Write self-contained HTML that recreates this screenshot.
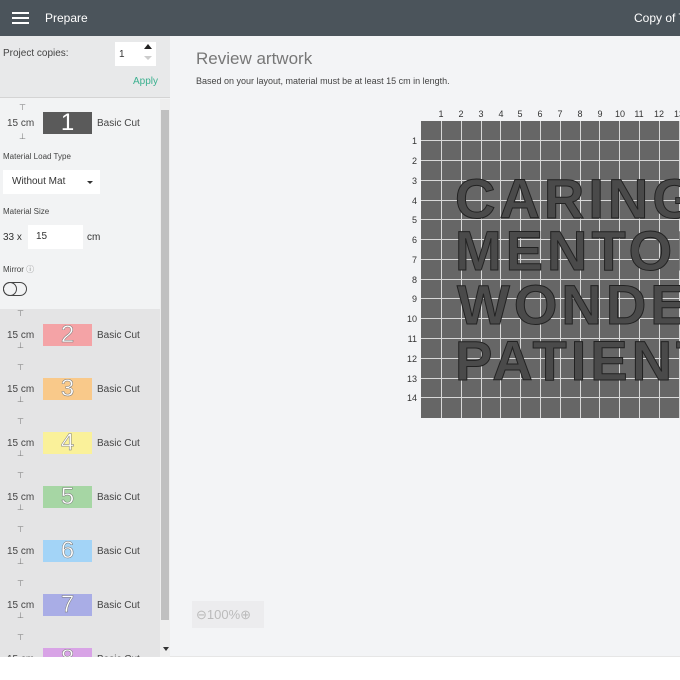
<!DOCTYPE html>
<html><head><style>
*{margin:0;padding:0;box-sizing:border-box}
body{width:680px;height:680px;overflow:hidden;background:#f3f4f6;font-family:"Liberation Sans",sans-serif;position:relative;color:#333}
.hdr{position:absolute;left:0;top:0;width:680px;height:36px;background:#4b545b;color:#fff;font-size:12px}
.side{position:absolute;left:0;top:36px;width:170px;height:644px;background:#f2f3f4}
.a{position:absolute}
.it{position:absolute;left:0;width:160px;height:54px;font-size:10px;color:#444}
.th{position:absolute;left:43px;width:49px;height:22px;color:#fff;font-size:24px;text-align:center;line-height:22px;-webkit-text-stroke:0.5px #777}
</style></head><body>
<div class="hdr">
 <div class="a" style="left:12px;top:12px;width:17px;height:2px;background:#fff"></div>
 <div class="a" style="left:12px;top:17px;width:17px;height:2px;background:#fff"></div>
 <div class="a" style="left:12px;top:22px;width:17px;height:2px;background:#fff"></div>
 <div class="a" style="left:45px;top:11px">Prepare</div>
 <div class="a" style="left:634px;top:11px;white-space:nowrap">Copy of T</div>
</div>
<div class="side">
 <div class="a" style="left:0;top:0;width:170px;height:62px;background:#e8e9ea;border-bottom:1px solid #d4d4d4"></div>
 <div class="a" style="left:3px;top:12px;font-size:10px;color:#444">Project copies:</div>
 <div class="a" style="left:115px;top:6px;width:41px;height:24px;background:#fff;font-size:10px;padding:7px 0 0 4px">1</div>
 <div class="a" style="left:144px;top:8px;width:0;height:0;border:4px solid transparent;border-bottom:5px solid #222;border-top:0"></div>
 <div class="a" style="left:144px;top:20px;width:0;height:0;border:4px solid transparent;border-top:4px solid #ccc;border-bottom:0"></div>
 <div class="a" style="left:133px;top:40px;font-size:10px;color:#3bb08f">Apply</div>
 <div class="a" style="left:160px;top:63px;width:10px;height:558px;background:#eee"></div>
 <div class="a" style="left:161px;top:74px;width:8px;height:510px;background:#c0c0c0"></div>
 <div class="a" style="left:0;top:273px;width:160px;height:348px;background:#e4e4e5"></div>
 <div class="a" style="left:0;top:621px;width:170px;height:23px;background:#fff"></div>
 <div class="it" style="top:60px">
  <div class="a" style="left:19px;top:7px;font-size:8px;color:#777">⊤</div>
  <div class="a" style="left:7px;top:22px">15 cm</div>
  <div class="a" style="left:19px;top:36px;font-size:8px;color:#777">⊥</div>
  <div class="th" style="top:16px;background:#5a5a5a;-webkit-text-stroke:0">1</div>
  <div class="a" style="left:97px;top:22px">Basic Cut</div>
 </div>
 <div class="a" style="left:3px;top:116px;font-size:8px;color:#444">Material Load Type</div>
 <div class="a" style="left:3px;top:134px;width:97px;height:24px;background:#fff;font-size:10px;padding:6px 0 0 9px;color:#333">Without Mat</div>
 <div class="a" style="left:87px;top:145px;border:3px solid transparent;border-top:3px solid #333;border-bottom:0"></div>
 <div class="a" style="left:3px;top:171px;font-size:8px;color:#444">Material Size</div>
 <div class="a" style="left:3px;top:196px;font-size:10px">33 x</div>
 <div class="a" style="left:28px;top:189px;width:55px;height:24px;background:#fff;font-size:10px;padding:6px 0 0 8px">15</div>
 <div class="a" style="left:87px;top:196px;font-size:10px">cm</div>
 <div class="a" style="left:3px;top:228px;font-size:8px;color:#444">Mirror <span style="color:#888">ⓘ</span></div>
 <div class="a" style="left:3px;top:246px;width:24px;height:14px;border:1.5px solid #444;border-radius:7px"></div>
 <div class="a" style="left:3px;top:246px;width:14px;height:14px;border:1.5px solid #444;border-radius:7px"></div>
</div>
<div class="a" style="left:0;top:309px;width:160px;height:348px;overflow:hidden">
 <div class="it" style="top:0"><div class="a" style="left:17px;top:0;font-size:8px;color:#777">⊤</div><div class="a" style="left:7px;top:21px">15 cm</div><div class="a" style="left:17px;top:32px;font-size:8px;color:#777">⊥</div><div class="th" style="top:15px;background:#f4a3a6">2</div><div class="a" style="left:97px;top:21px">Basic Cut</div></div>
 <div class="it" style="top:54px"><div class="a" style="left:17px;top:0;font-size:8px;color:#777">⊤</div><div class="a" style="left:7px;top:21px">15 cm</div><div class="a" style="left:17px;top:32px;font-size:8px;color:#777">⊥</div><div class="th" style="top:15px;background:#f9c98a">3</div><div class="a" style="left:97px;top:21px">Basic Cut</div></div>
 <div class="it" style="top:108px"><div class="a" style="left:17px;top:0;font-size:8px;color:#777">⊤</div><div class="a" style="left:7px;top:21px">15 cm</div><div class="a" style="left:17px;top:32px;font-size:8px;color:#777">⊥</div><div class="th" style="top:15px;background:#faf19a">4</div><div class="a" style="left:97px;top:21px">Basic Cut</div></div>
 <div class="it" style="top:162px"><div class="a" style="left:17px;top:0;font-size:8px;color:#777">⊤</div><div class="a" style="left:7px;top:21px">15 cm</div><div class="a" style="left:17px;top:32px;font-size:8px;color:#777">⊥</div><div class="th" style="top:15px;background:#a6d6a4">5</div><div class="a" style="left:97px;top:21px">Basic Cut</div></div>
 <div class="it" style="top:216px"><div class="a" style="left:17px;top:0;font-size:8px;color:#777">⊤</div><div class="a" style="left:7px;top:21px">15 cm</div><div class="a" style="left:17px;top:32px;font-size:8px;color:#777">⊥</div><div class="th" style="top:15px;background:#a3d4f7">6</div><div class="a" style="left:97px;top:21px">Basic Cut</div></div>
 <div class="it" style="top:270px"><div class="a" style="left:17px;top:0;font-size:8px;color:#777">⊤</div><div class="a" style="left:7px;top:21px">15 cm</div><div class="a" style="left:17px;top:32px;font-size:8px;color:#777">⊥</div><div class="th" style="top:15px;background:#a9ade6">7</div><div class="a" style="left:97px;top:21px">Basic Cut</div></div>
 <div class="it" style="top:324px"><div class="a" style="left:17px;top:0;font-size:8px;color:#777">⊤</div><div class="a" style="left:7px;top:21px">15 cm</div><div class="th" style="top:15px;background:#d8a3e6">8</div><div class="a" style="left:97px;top:21px">Basic Cut</div></div>
</div>
<div class="a" style="left:163px;top:647px;border:3px solid transparent;border-top:4px solid #333;border-bottom:0"></div>
<div class="a" style="left:170px;top:656px;width:510px;height:24px;background:#fff;border-top:1px solid #e6e6e6"></div>
<div class="a" style="left:196px;top:49px;font-size:17px;color:#777">Review artwork</div>
<div class="a" style="left:196px;top:76px;font-size:9px;color:#444">Based on your layout, material must be at least 15 cm in length.</div>
<div class="a" style="left:192px;top:601px;width:72px;height:27px;background:#ececee;color:#bbb;font-size:13px;padding:6px 0 0 4px">⊖100%⊕</div>
<svg class="a" style="left:0;top:0" width="680" height="680">
 <g font-family="Liberation Sans" font-size="9" fill="#333" text-anchor="middle">
  <text x="441" y="117">1</text><text x="461" y="117">2</text><text x="481" y="117">3</text><text x="501" y="117">4</text><text x="520" y="117">5</text><text x="540" y="117">6</text><text x="560" y="117">7</text><text x="580" y="117">8</text><text x="600" y="117">9</text><text x="620" y="117">10</text><text x="639" y="117">11</text><text x="659" y="117">12</text><text x="679" y="117">13</text>
 </g>
 <g font-family="Liberation Sans" font-size="9" fill="#333" text-anchor="end">
  <text x="417" y="144">1</text><text x="417" y="164">2</text><text x="417" y="184">3</text><text x="417" y="204">4</text><text x="417" y="223">5</text><text x="417" y="243">6</text><text x="417" y="263">7</text><text x="417" y="283">8</text><text x="417" y="302">9</text><text x="417" y="322">10</text><text x="417" y="342">11</text><text x="417" y="362">12</text><text x="417" y="382">13</text><text x="417" y="401">14</text>
 </g>
 <rect x="421" y="121" width="259" height="297" fill="#666"/>
 <g stroke="#d8d8d8" stroke-width="1">
  <path d="M441.5 121V418M461.5 121V418M481.5 121V418M500.5 121V418M520.5 121V418M540.5 121V418M560.5 121V418M580.5 121V418M599.5 121V418M619.5 121V418M639.5 121V418M659.5 121V418M679.5 121V418"/>
  <path d="M421 140.5H680M421 160.5H680M421 180.5H680M421 200.5H680M421 219.5H680M421 239.5H680M421 259.5H680M421 279.5H680M421 298.5H680M421 318.5H680M421 338.5H680M421 358.5H680M421 378.5H680M421 397.5H680"/>
 </g>
 <g font-family="Liberation Sans" font-weight="bold" font-size="56" fill="#4a4a4a" stroke="#222" stroke-width="1" letter-spacing="4">
  <text x="455" y="218">CARING</text>
  <text x="455" y="270">MENTOR</text>
  <text x="457" y="324">WONDER</text>
  <text x="455" y="380">PATIENT</text>
 </g>
</svg>
</body></html>
